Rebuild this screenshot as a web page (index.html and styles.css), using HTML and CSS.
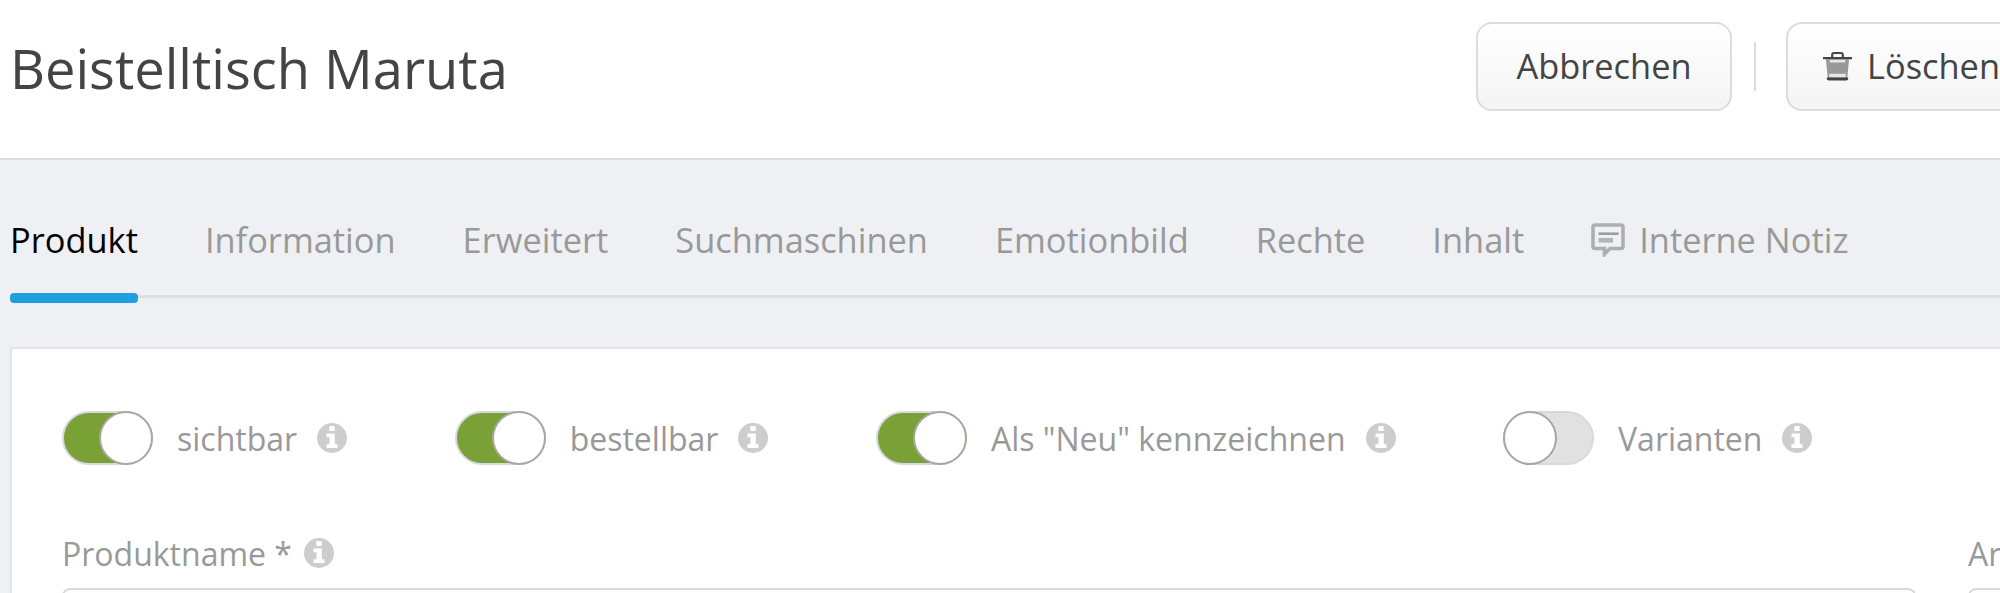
FILE: index.html
```
<!DOCTYPE html>
<html lang="de">
<head>
    <meta charset="UTF-8">
    <title>Beistelltisch Maruta</title>
    <link rel="stylesheet" href="styles.css">
</head>
<body>
    <svg width="0" height="0" class="sprite">
        <symbol id="icon-info" viewBox="0 0 30 30">
            <circle cx="15" cy="15" r="15" fill="#cdcdcd"/>
            <path d="M12.3 3h5.400v5h-5.400zM9.500 10.500h8.300v10.700h2.700v3.800H9.500v-3.800h3v-6.900h-3z" fill="#fff"/>
        </symbol>
    </svg>

    <header class="header">
        <h1>Beistelltisch Maruta</h1>
        <div class="actions">
            <button class="btn">Abbrechen</button>
            <span class="separator"></span>
            <button class="btn btn-delete">
                <svg class="icon-trash" viewBox="0 0 30 30">
                    <path d="M3 8h24l-2 20H5z" fill="#999"/>
                    <path d="M7 8.500h16v3H7zM6.500 23h17v4h-17z" fill="#e6e6e6"/>
                    <path d="M9.500 6V3.500q0-2 2-2h7q2 0 2 2V6" fill="none" stroke="#444" stroke-width="2.200"/>
                    <path d="M0 5.800h30v2.200H0zM4 27h22v1.500q0 1.500-2 1.500H6q-2 0-2-1.500z" fill="#444"/>
                </svg>
                Löschen
            </button>
        </div>
    </header>

    <nav class="tabs">
        <a class="tab active">Produkt</a>
        <a class="tab">Information</a>
        <a class="tab">Erweitert</a>
        <a class="tab">Suchmaschinen</a>
        <a class="tab">Emotionbild</a>
        <a class="tab">Rechte</a>
        <a class="tab">Inhalt</a>
        <a class="tab">
            <svg class="icon-note" viewBox="0 0 34 34" fill="none">
                <path d="M4 2h26q2 0 2 2v19.500q0 2-2 2H19L13.500 31v-5.500H4q-2 0-2-2V4q0-2 2-2z" stroke="#adaeaf" stroke-width="3.600"/>
                <path d="M7.500 10.700h20" stroke="#9c9d9e" stroke-width="2.600"/>
                <path d="M7.500 17.300h14.500" stroke="#b4b5b6" stroke-width="4.600"/>
            </svg>
            Interne Notiz
        </a>
    </nav>

    <main class="panel">
        <div class="switches">
            <div class="switch-item">
                <span class="switch on"></span>
                <label>sichtbar</label>
                <svg class="info"><use href="#icon-info"/></svg>
            </div>
            <div class="switch-item">
                <span class="switch on"></span>
                <label>bestellbar</label>
                <svg class="info"><use href="#icon-info"/></svg>
            </div>
            <div class="switch-item">
                <span class="switch on"></span>
                <label>Als "Neu" kennzeichnen</label>
                <svg class="info"><use href="#icon-info"/></svg>
            </div>
            <div class="switch-item">
                <span class="switch"></span>
                <label>Varianten</label>
                <svg class="info"><use href="#icon-info"/></svg>
            </div>
        </div>

        <div class="fields">
            <div class="field field-name">
                <div class="field-label">
                    <label>Produktname *</label>
                    <svg class="info"><use href="#icon-info"/></svg>
                </div>
                <div class="input"></div>
            </div>
            <div class="field field-number">
                <div class="field-label">
                    <label>Artikelnummer</label>
                </div>
                <div class="input"></div>
            </div>
        </div>
    </main>
</body>
</html>
```
FILE: styles.css
```
*,
*::before,
*::after {
    box-sizing: border-box;
}

body {
    margin: 0;
    height: 593px;
    overflow: hidden;
    background: #eff0f3;
    color: #444;
    font-family: "Open Sans", "Noto Sans", sans-serif;
    font-size: 34.4px;
}

.sprite {
    display: block;
}

.header {
    display: flex;
    height: 160px;
    padding: 22px 0 0 10px;
    background: #fff;
    border-bottom: 2px solid #dadbdc;
    white-space: nowrap;
}

h1 {
    flex: none;
    width: 1466px;
    margin: 0;
    font-size: 54.2px;
    font-weight: 400;
    line-height: 92px;
}

.actions {
    display: flex;
    flex: none;
    align-items: flex-start;
}

.btn {
    height: 89px;
    width: 256px;
    padding: 0 0 2px;
    border: 2px solid #dcdcdc;
    border-radius: 16px;
    background: linear-gradient(#fff, #f4f4f4);
    color: #444;
    font: inherit;
}

.btn-delete {
    display: flex;
    align-items: center;
    padding-left: 35px;
    gap: 15px;
}

.icon-trash {
    width: 29px;
    height: 30px;
}

.separator {
    width: 2px;
    height: 49px;
    margin: 20px 30px 0 22px;
    background: #dcdcdc;
}

.tabs {
    display: flex;
    gap: 67px;
    height: 138px;
    margin-left: 10px;
    border-bottom: 3px solid #dddfe1;
    white-space: nowrap;
}

.tab {
    display: flex;
    align-items: center;
    gap: 14px;
    height: 143px;
    padding-top: 17px;
    line-height: 40px;
    color: #999;
}

.tab.active {
    position: relative;
    color: #000;
}

.tab.active::after {
    content: "";
    position: absolute;
    left: 0;
    right: 0;
    bottom: 0;
    height: 10px;
    border-radius: 4px;
    background: #1f9fe0;
}

.icon-note {
    width: 34px;
    height: 34px;
}

.panel {
    width: 2000px;
    height: 260px;
    margin: 49px 0 0 10px;
    padding: 62px 0 0 50px;
    border: 2px solid #e3e4e6;
    background: #fff;
    color: #999;
    font-size: 32px;
    white-space: nowrap;
}

.switches {
    display: flex;
    gap: 107.5px;
}

.switch-item {
    display: flex;
    align-items: center;
    height: 54px;
}

.switch-item label {
    margin: 0 20px 0 24px;
}

.switch {
    display: flex;
    width: 91px;
    height: 54px;
    border: 2px solid #d8d8e4;
    border-radius: 27px;
    background: #e1e1e1;
}

.switch::before {
    content: "";
    width: 54px;
    height: 54px;
    margin: -2px;
    border: 2px solid #aaa59e;
    border-radius: 50%;
    background: #fff;
}

.switch.on {
    justify-content: flex-end;
    background: #7aa136;
}

.info {
    width: 30px;
    height: 30px;
}

.fields {
    display: flex;
    margin-top: 65px;
    gap: 52px;
}

.field {
    flex: none;
}

.field-name {
    width: 1854px;
}

.field-number {
    width: 600px;
}

.field-label {
    display: flex;
    align-items: center;
    gap: 12px;
    height: 46px;
}

.input {
    height: 80px;
    margin-top: 12px;
    border: 2px solid #d8d8e4;
    border-radius: 8px;
    background: #fff;
}
```
